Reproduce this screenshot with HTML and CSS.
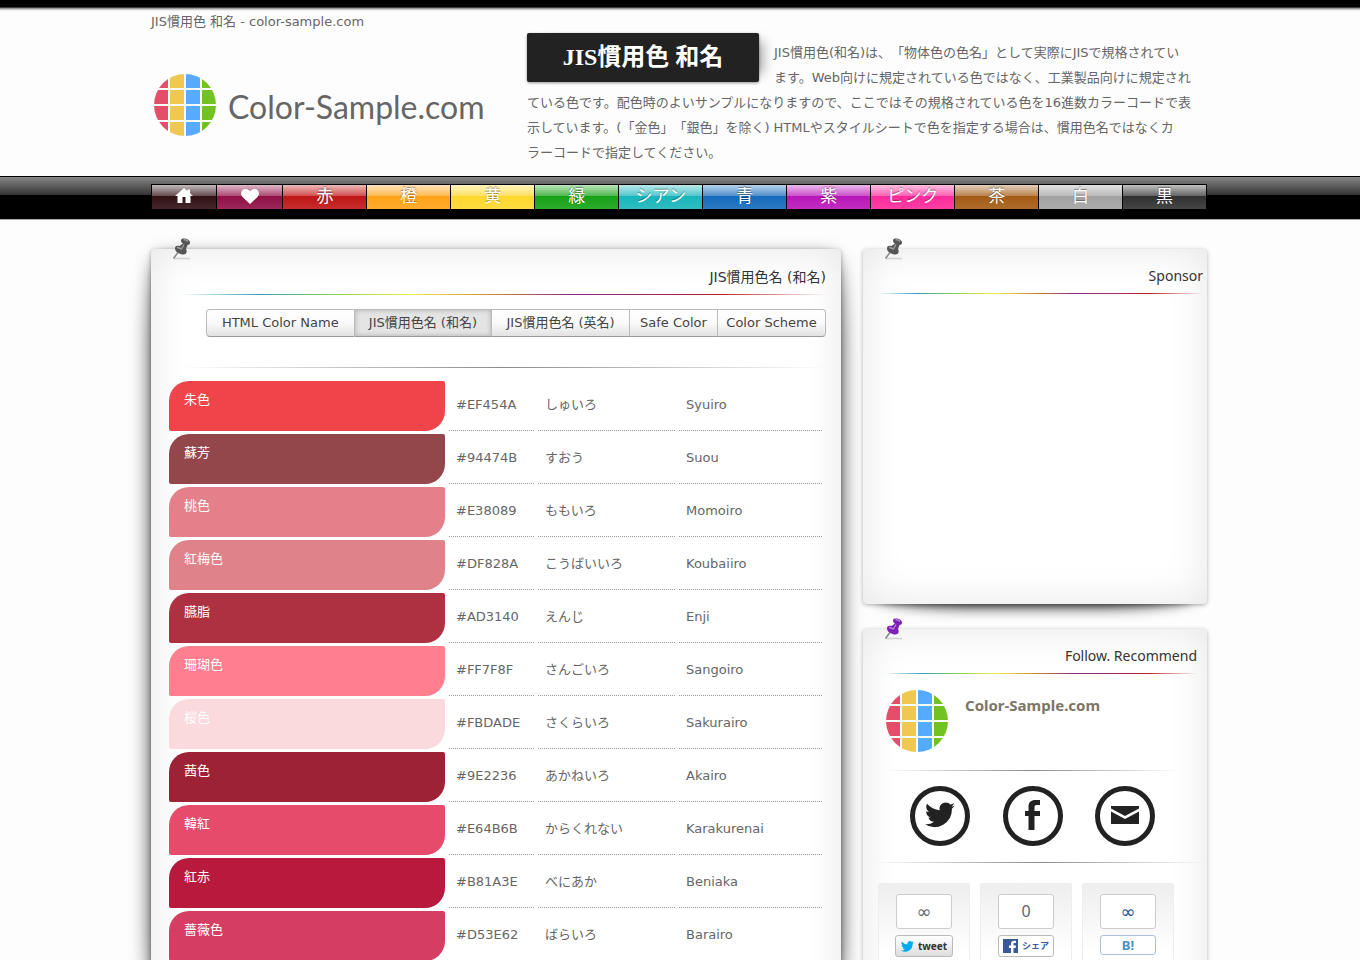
FILE: index.html
```html
<!DOCTYPE html>
<html lang="ja">
<head>
<meta charset="utf-8">
<title>JIS慣用色 和名 - color-sample.com</title>
<link rel="stylesheet" href="styles.css">
</head>
<body>
<svg class="defs" width="0" height="0" aria-hidden="true">
  <defs>
    <clipPath id="disc"><circle cx="31" cy="31" r="31"/></clipPath>
    <symbol id="globe" viewBox="0 0 62 62">
      <g clip-path="url(#disc)">
        <path fill="#e54e69" d="M0 0h14v14H0zM0 16h14v14H0zM0 32h14v14H0zM0 48h14v14H0z"/>
        <path fill="#f0c851" d="M16 0h14v14H16zM16 16h14v14H16zM16 32h14v14H16zM16 48h14v14H16z"/>
        <path fill="#56aaff" d="M32 0h14v14H32zM32 16h14v14H32zM32 32h14v14H32zM32 48h14v14H32z"/>
        <path fill="#72c224" d="M48 0h14v14H48zM48 16h14v14H48zM48 32h14v14H48zM48 48h14v14H48z"/>
      </g>
    </symbol>
    <symbol id="pin" viewBox="0 0 22 24">
      <path d="M3 21.500h16" stroke="#bbb" stroke-width="1.500" opacity=".6"/>
      <path d="M2.500 21.500 8 14" stroke="#888" stroke-width="1.500"/>
      <path d="M10 3.500C10 0 19 1.500 19 5.500c0 1.800-1.200 2.500-2.500 2.500l-1.500 4c1.500 2.500.5 5.500-2.500 5.500-3.500 0-8.500-2.500-8.500-6 0-2.500 2-3 4.500-2.500L12 6.500c-1.200-.7-2-1.500-2-3z" fill="currentColor"/>
      <path d="M12.500 3c1.500-.5 3.500.3 4.500 1.500M13 7.500 10.500 12M6 10.500c1.500 0 3 .5 4.500 2" stroke="#fff" stroke-opacity=".45" stroke-width="1.300" fill="none"/>
    </symbol>
    <symbol id="bird" viewBox="0 0 24 20">
      <path d="M24 2.300a9.800 9.800 0 0 1-2.800.8A4.900 4.900 0 0 0 23.300.4a9.900 9.900 0 0 1-3.100 1.200 4.900 4.900 0 0 0-8.400 4.500A14 14 0 0 1 1.700 1a4.900 4.900 0 0 0 1.500 6.600 4.900 4.900 0 0 1-2.200-.6 4.900 4.900 0 0 0 3.900 4.900 4.900 4.900 0 0 1-2.200.1 4.900 4.900 0 0 0 4.600 3.400A9.900 9.900 0 0 1 0 17.400 14 14 0 0 0 21.500 5z" fill="currentColor"/>
    </symbol>
  </defs>
</svg>
<header class="header">
  <p class="crumb wrap">JIS慣用色 和名 - color-sample.com</p>
  <div class="intro wrap">
    <a class="logo" href="#"><svg width="62" height="62" aria-hidden="true"><use href="#globe"/></svg><span>Color-Sample.com</span></a>
    <div class="about">
      <h1>JIS慣用色 和名</h1>
      <p>JIS慣用色(和名)は、「物体色の色名」として実際にJISで規格されてい<br>ます。Web向けに規定されている色ではなく、工業製品向けに規定され<br>ている色です。配色時のよいサンプルになりますので、ここではその規格されている色を16進数カラーコードで表<br>示しています。(「金色」「銀色」を除く) HTMLやスタイルシートで色を指定する場合は、慣用色名ではなくカ<br>ラーコードで指定してください。</p>
    </div>
  </div>
</header>
<nav class="nav">
  <ul class="wrap">
    <li class="c-home"><a href="#" aria-label="Home"><svg width="18" height="16" viewBox="0 0 18 16"><path fill="#fff" d="M9 0 0 8h2.500v7h5V9h3v6h5V8H18l-3-2.700V1.500h-2.500V3z"/></svg></a></li>
    <li class="c-heart"><a href="#" aria-label="Favorite"><svg width="18" height="15" viewBox="0 0 18 15"><path fill="#fff" d="M9 15 1.500 8C-1.500 4.500.5 0 4.500 0 6.500 0 8 1 9 2.500 10 1 11.500 0 13.500 0c4 0 6 4.500 3 8z"/></svg></a></li>
    <li class="c-red"><a href="#">赤</a></li>
    <li class="c-orange"><a href="#">橙</a></li>
    <li class="c-yellow"><a href="#">黄</a></li>
    <li class="c-green"><a href="#">緑</a></li>
    <li class="c-cyan"><a href="#">シアン</a></li>
    <li class="c-blue"><a href="#">青</a></li>
    <li class="c-purple"><a href="#">紫</a></li>
    <li class="c-pink"><a href="#">ピンク</a></li>
    <li class="c-brown"><a href="#">茶</a></li>
    <li class="c-white"><a href="#">白</a></li>
    <li class="c-black"><a href="#">黒</a></li>
  </ul>
</nav>
<div class="page wrap">
  <main class="card card-main">
    <svg class="pin" width="22" height="24" aria-hidden="true"><use href="#pin"/></svg>
    <h2>JIS慣用色名 (和名)</h2>
    <hr class="rainbow">
    <div class="tabs">
      <a class="t1" href="#">HTML Color Name</a><a class="t2 on" href="#">JIS慣用色名 (和名)</a><a class="t2" href="#">JIS慣用色名 (英名)</a><a class="t3" href="#">Safe Color</a><a class="t4" href="#">Color Scheme</a>
    </div>
    <hr class="fade">
    <table class="colors">
      <colgroup><col class="k1"><col class="k2"><col class="k3"><col class="k4"></colgroup>
      <tbody>
      <tr><th scope="row" style="background:#EF454A">朱色</th><td>#EF454A</td><td>しゅいろ</td><td>Syuiro</td></tr>
      <tr><th scope="row" style="background:#94474B">蘇芳</th><td>#94474B</td><td>すおう</td><td>Suou</td></tr>
      <tr><th scope="row" style="background:#E38089">桃色</th><td>#E38089</td><td>ももいろ</td><td>Momoiro</td></tr>
      <tr><th scope="row" style="background:#DF828A">紅梅色</th><td>#DF828A</td><td>こうばいいろ</td><td>Koubaiiro</td></tr>
      <tr><th scope="row" style="background:#AD3140">臙脂</th><td>#AD3140</td><td>えんじ</td><td>Enji</td></tr>
      <tr><th scope="row" style="background:#FF7F8F">珊瑚色</th><td>#FF7F8F</td><td>さんごいろ</td><td>Sangoiro</td></tr>
      <tr><th scope="row" style="background:#FBDADE">桜色</th><td>#FBDADE</td><td>さくらいろ</td><td>Sakurairo</td></tr>
      <tr><th scope="row" style="background:#9E2236">茜色</th><td>#9E2236</td><td>あかねいろ</td><td>Akairo</td></tr>
      <tr><th scope="row" style="background:#E64B6B">韓紅</th><td>#E64B6B</td><td>からくれない</td><td>Karakurenai</td></tr>
      <tr><th scope="row" style="background:#B81A3E">紅赤</th><td>#B81A3E</td><td>べにあか</td><td>Beniaka</td></tr>
      <tr><th scope="row" style="background:#D53E62">薔薇色</th><td>#D53E62</td><td>ばらいろ</td><td>Barairo</td></tr>
      </tbody>
    </table>
  </main>
  <aside class="side">
    <section class="card card-sponsor">
      <svg class="pin" width="22" height="24" aria-hidden="true"><use href="#pin"/></svg>
      <h2>Sponsor</h2>
      <hr class="rainbow">
    </section>
    <section class="card card-follow">
      <svg class="pin pin-purple" width="22" height="24" aria-hidden="true"><use href="#pin"/></svg>
      <h2>Follow. Recommend</h2>
      <hr class="rainbow">
      <div class="site"><svg width="62" height="62" aria-hidden="true"><use href="#globe"/></svg><a href="#">Color-Sample.com</a></div>
      <hr class="fade">
      <div class="social">
        <a href="#" aria-label="Twitter"><svg width="30" height="26" viewBox="0 0 24 20"><use href="#bird"/></svg></a>
        <a href="#" aria-label="Facebook"><svg width="16" height="30" viewBox="0 0 16 30"><path fill="#222" d="M3.500 30V16H0v-5h3.500V7C3.500 2 6 0 10.500 0H15v5h-3c-2 0-2.500.7-2.500 2.500V11H15v5H9.500v14z"/></svg></a>
        <a href="#" aria-label="Mail"><svg width="28" height="18" viewBox="0 0 28 18"><path fill="#222" d="M0 0h28v2.500L14 10 0 2.500zM0 5.500 14 13l14-7.500V18H0z"/></svg></a>
      </div>
      <hr class="fade fade-wide">
      <div class="shares">
        <div class="share"><span class="count inf">∞</span><button class="tweet" type="button"><svg width="13" height="11" viewBox="0 0 24 20"><use href="#bird"/></svg>tweet</button></div>
        <div class="share"><span class="count">0</span><button class="fb" type="button"><svg width="15" height="14" viewBox="0 0 15 14"><path fill="#3b5998" d="M0 0h15v14H0z"/><path fill="#fff" d="M8 14V9H6V6.500h2V5c0-2 1-3.200 3-3.200h2V4h-1.500c-.8 0-1 .4-1 1.200v1.300H13L12.600 9h-2.100v5z"/></svg>シェア</button></div>
        <div class="share"><span class="count inf blue">∞</span><button class="hatena" type="button">B!</button></div>
      </div>
    </section>
  </aside>
</div>
</body>
</html>
```
FILE: styles.css
```css
* { box-sizing: border-box; }
body {
  margin: 0;
  background: #fdfdfd;
  color: #666;
  font: 13px/25px "DejaVu Sans", "Noto Sans CJK JP", sans-serif;
  text-spacing-trim: space-all;
}
h1, h2, p, ul { margin: 0; padding: 0; }
a { color: inherit; text-decoration: none; }
svg { display: block; }
.defs { position: absolute; }
.wrap { width: 100%; max-width: 1058px; margin: 0 auto; }

.header {
  background: linear-gradient(#000 7px, #777 8px, #bbb 9px, #fdfdfd 11px);
  padding-top: 9px;
}
.crumb { height: 24px; }
.intro { display: flex; height: 143px; }
.logo {
  display: flex;
  align-items: center;
  gap: 12px;
  width: 376px;
  flex: none;
  padding-left: 3px;
  font: 32px/40px Lato, sans-serif;
  color: #666;
}
.logo span { padding-top: 4px; }
.about { flex: 1; white-space: nowrap; }
.about p { padding-top: 7px; }
h1 {
  float: left;
  width: 232px;
  margin-right: 15px;
  background: #222;
  border-radius: 2px;
  box-shadow: 0 1px 3px rgba(0,0,0,.4), 12px 0 12px -8px rgba(0,0,0,.35);
  color: #fff;
  font: bold 24px/49px "Liberation Serif", "Noto Sans CJK JP", serif;
  text-align: center;
}

.nav {
  border-top: 1px solid #000;
  border-bottom: 1px solid #aaa;
  background: linear-gradient(#888, #6a6a6a 6px, #333 18px, #000 18px);
  padding: 7px 0 10px;
}
.nav ul { display: flex; list-style: none; padding-right: 2px; }
.nav li {
  flex: 84 1 0;
  border: 1px solid #000;
  border-width: 1px 0 0 1px;
}
.nav li:last-child { border-right-width: 1px; }
.nav .c-home { flex-grow: 65; }
.nav .c-heart { flex-grow: 66; }
.nav a {
  display: flex;
  justify-content: center;
  align-items: center;
  height: 24px;
  padding-bottom: 2px;
  background: linear-gradient(rgba(255,255,255,.7), rgba(255,255,255,.25) 11px, rgba(255,255,255,0) 11px, rgba(255,255,255,.1));
  color: #fff;
  font-size: 17px;
  text-shadow: 0 -1px 1px rgba(0,0,0,.4);
}
.c-home { background: #301013; }
.c-heart { background: #910f46; }
.c-red { background: #c01515; }
.c-orange { background: #ffa216; }
.c-yellow { background: #ffd72c; }
.c-green { background: #16a216; }
.c-cyan { background: #18b5ba; }
.c-blue { background: #146abb; }
.c-purple { background: #b915b9; }
.c-pink { background: #ff2a9b; }
.c-brown { background: #a35b13; }
.c-white { background: #a2a2a2; }
.c-black { background: #303030; }

.page { display: flex; gap: 22px; padding: 29px 2px 0 0; align-items: flex-start; }
.card {
  position: relative;
  background: #fff;
  border-radius: 4px;
  box-shadow: 0 1px 4px rgba(0,0,0,.3), inset 0 0 40px rgba(0,0,0,.1);
}
.card::before {
  content: "";
  position: absolute;
  z-index: -1;
}
.card-main { flex: 1; padding: 16px 15px 60px 14px; }
.card-main::before { inset: 10px 0; border-radius: 10px / 100px; box-shadow: 0 0 20px rgba(0,0,0,.8); }
.card-sponsor::before { inset: 85% 16px 0; border-radius: 100px / 10px; box-shadow: 0 2px 14px 1px rgba(0,0,0,.9); }
.pin { position: absolute; left: 20px; top: -12px; color: #555; }
.pin-purple { color: #7e1fb5; }
.card h2 { color: #333; font-weight: normal; text-align: right; }
.card-main h2 { font-size: 14px; }
.side h2 { font-family: "Noto Sans", sans-serif; font-size: 14px; }
hr { border: 0; height: 1px; margin: 0; }
.rainbow { background: linear-gradient(90deg, rgba(43,156,190,0), #2e9fc0 12%, #8bd44a 24%, #f4ec4a 36%, #c98232 49%, #8c2a86 60%, #a02870 72%, #c02020 84%, rgba(192,32,32,0)); }
.fade { background: linear-gradient(90deg, rgba(130,130,130,0), #8a8a8a 50%, rgba(130,130,130,0)); }
.card-main .rainbow { margin: 4px 0 14px 16px; }
.card-main .fade { margin: 30px 0 10px 16px; }

.tabs { display: flex; margin-left: 41px; color: #444; }
.tabs a {
  border: 1px solid #bbb;
  border-bottom-color: #999;
  border-left-width: 0;
  background: linear-gradient(#fff, #fafafa 50%, #e2e2e2);
  line-height: 26px;
  text-align: center;
  white-space: nowrap;
}
.tabs a:first-child { border-left-width: 1px; border-radius: 4px 0 0 4px; }
.tabs a:last-child { border-radius: 0 4px 4px 0; }
.tabs .on { background: #e4e4e4; box-shadow: inset 0 0 5px rgba(0,0,0,.25); }
.t1 { flex: 148; }
.t2 { flex: 138; }
.t3 { flex: 88; }
.t4 { flex: 108; }

.colors { width: 100%; table-layout: fixed; border-spacing: 4px 3px; }
.k1 { width: 276px; }
.k2 { width: 85px; }
.k3 { width: 137px; }
.colors th, .colors td { height: 50px; padding: 0 0 3px 7px; text-align: left; }
.colors th {
  border-radius: 20px 2px 20px 2px;
  color: #fff;
  font-weight: normal;
  vertical-align: top;
  padding: 6px 15px 0;
}
.colors td { border-bottom: 1px dotted #999; }

.side { width: 344px; flex: none; display: grid; gap: 25px; }
.card-sponsor { min-height: 355px; padding: 14px 4px 0 15px; }
.card-sponsor .rainbow { margin-top: 5px; }
.card-follow { padding: 14px 10px 60px; }
.card-follow .rainbow { margin: 5px 0 16px 12px; }
.site { display: flex; gap: 17px; padding: 0 13px; }
.site a { padding-top: 3px; color: #7d7666; font: bold 15px/25px "Noto Sans", sans-serif; }
.card-follow .fade { margin: 18px 17px 15px 12px; }
.social { display: flex; justify-content: space-between; padding: 0 42px 0 37px; color: #222; }
.social a {
  display: flex;
  align-items: center;
  justify-content: center;
  width: 60px;
  height: 60px;
  border: 5px solid #222;
  border-radius: 50%;
  padding-bottom: 3px;
}
.card-follow .fade-wide { margin: 16px -10px 20px 0; }
.shares { display: flex; gap: 10px; margin-left: 5px; }
.share {
  display: flex;
  flex-direction: column;
  align-items: center;
  gap: 6px;
  width: 92px;
  height: 120px;
  padding-top: 11px;
  border: solid #eee;
  border-width: 0 1px;
  border-radius: 2px;
  background: linear-gradient(#eee, #fff 70px);
}
.count {
  width: 56px;
  border: 1px solid #ccc;
  border-radius: 3px;
  background: #fff;
  font: 16px/33px "Noto Sans", sans-serif;
  text-align: center;
}
.count.inf { font: 18px/33px "DejaVu Sans", sans-serif; }
.count.blue { color: #1b4f9c; }
.share button {
  display: flex;
  align-items: center;
  justify-content: center;
  gap: 4px;
  width: 56px;
  height: 22px;
  padding: 0;
  border: 1px solid #bbb;
  border-radius: 3px;
  background: #fff;
  font: bold 10px/18px "Noto Sans", "Noto Sans CJK JP", sans-serif;
  white-space: nowrap;
}
.share .tweet { width: 58px; background: linear-gradient(#fff, #ddd); color: #333; }
.tweet svg { color: #00aced; }
.share .fb { color: #3b5998; font-size: 9px; }
.share .hatena { height: 20px; border-color: #a9bfdb; color: #4a90c2; font-size: 13px; }
```
